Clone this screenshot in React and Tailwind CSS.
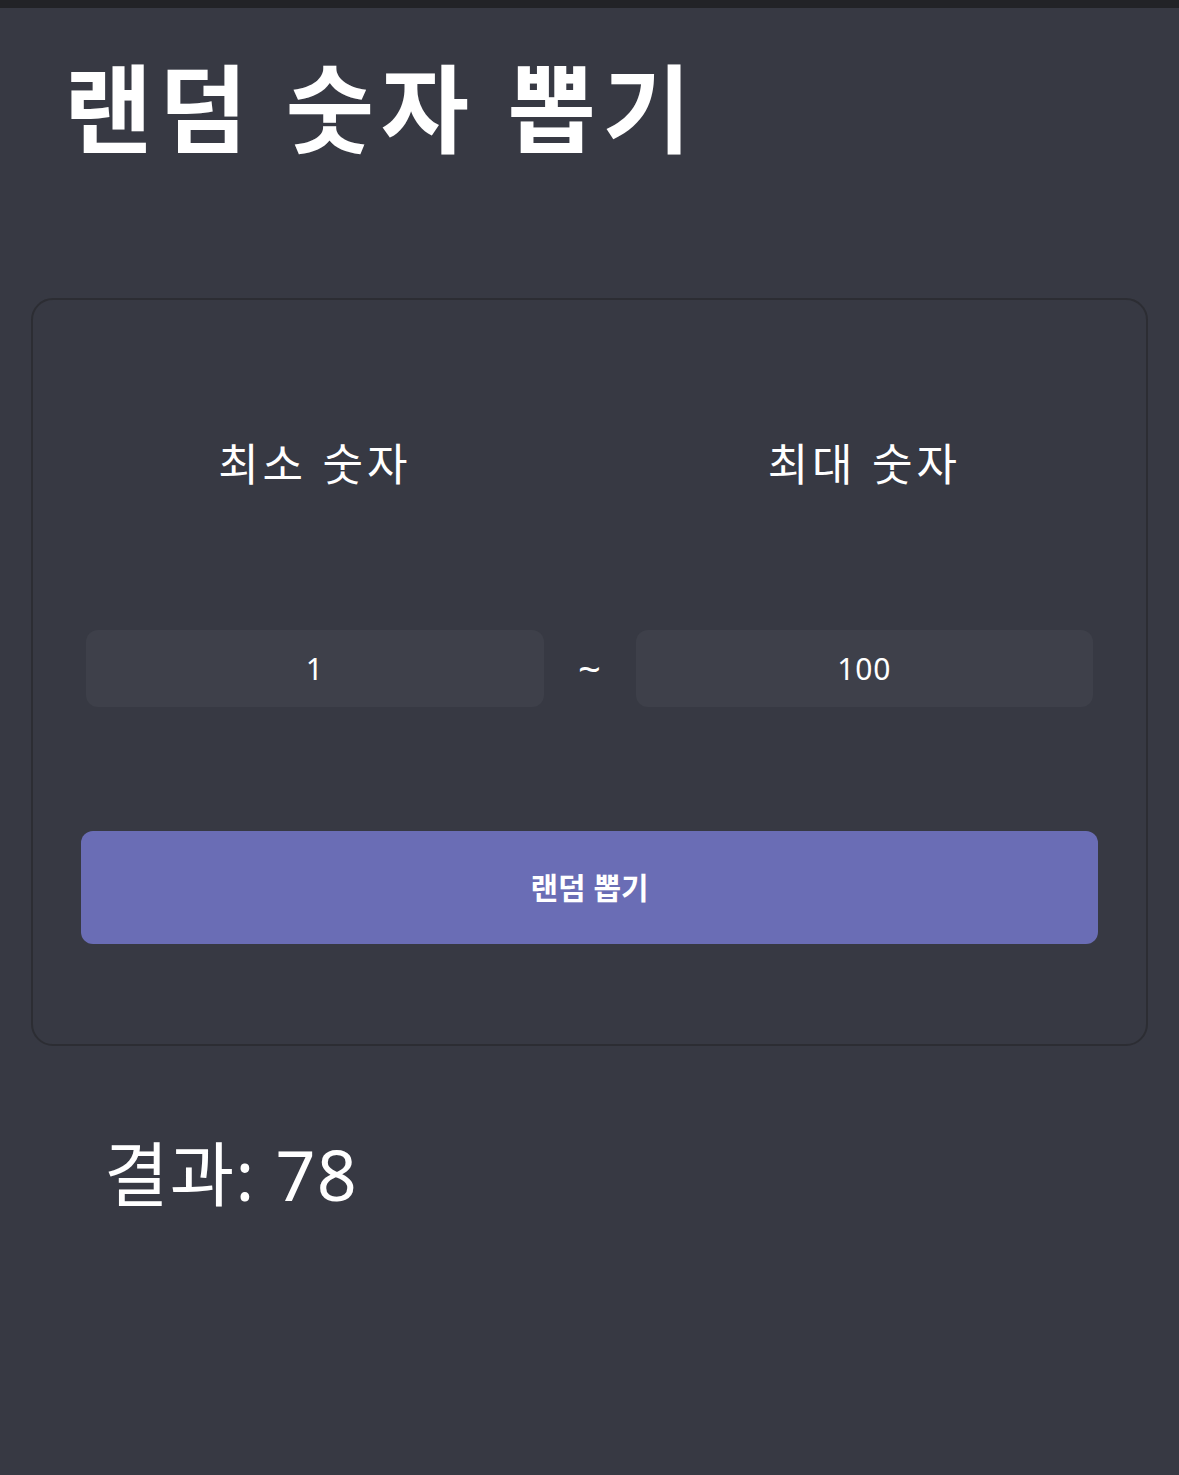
import React, { useState } from 'react';

const App = () => {
  const [min, setMin] = useState('1');
  const [max, setMax] = useState('100');
  const [result, setResult] = useState(78);

  const pick = () => {
    const lo = parseInt(min, 10) || 0;
    const hi = parseInt(max, 10) || 0;
    setResult(Math.floor(Math.random() * (hi - lo + 1)) + lo);
  };

  const font = { fontFamily: '"Noto Sans", "Noto Sans CJK KR", sans-serif' };

  return (
    <div className="min-h-screen bg-[#373943] border-t-8 border-[#222327] text-white" style={font}>
      {/* Title */}
      <h1 className="pl-[64px] pt-[40px] text-[96px] font-semibold leading-[120px] tracking-[0.07em]">
        랜덤 숫자 뽑기
      </h1>

      {/* Card */}
      <div className="mx-[31px] mt-[130px] border-2 border-[#2c2d33] rounded-[22px] px-[48px] pt-[134px] pb-[100px]">
        <div className="grid grid-cols-[1fr_82px_1fr] items-end">
          <div className="px-[5px] flex flex-col items-center">
            <label className="text-[44px] leading-[60px] tracking-[0.09em]">최소 숫자</label>
            <input
              value={min}
              onChange={(e) => setMin(e.target.value)}
              className="mt-[136px] w-full h-[77px] rounded-[12px] bg-[#3e404a] text-center text-[30px] tracking-[0.03em] outline-none"
            />
          </div>
          <div className="h-[77px] flex items-center justify-center text-[40px] leading-none">~</div>
          <div className="px-[5px] flex flex-col items-center">
            <label className="text-[44px] leading-[60px] tracking-[0.09em]">최대 숫자</label>
            <input
              value={max}
              onChange={(e) => setMax(e.target.value)}
              className="mt-[136px] w-full h-[77px] rounded-[12px] bg-[#3e404a] text-center text-[30px] tracking-[0.03em] outline-none"
            />
          </div>
        </div>

        <button
          onClick={pick}
          className="mt-[124px] w-full h-[113px] rounded-[12px] bg-[#6a6db5] text-[30px] font-bold"
        >
          랜덤 뽑기
        </button>
      </div>

      {/* Result */}
      <p className="pl-[104px] mt-[78px] text-[70px] leading-[100px] tracking-[0.02em]">결과: {result}</p>
    </div>
  );
};

export default App;
